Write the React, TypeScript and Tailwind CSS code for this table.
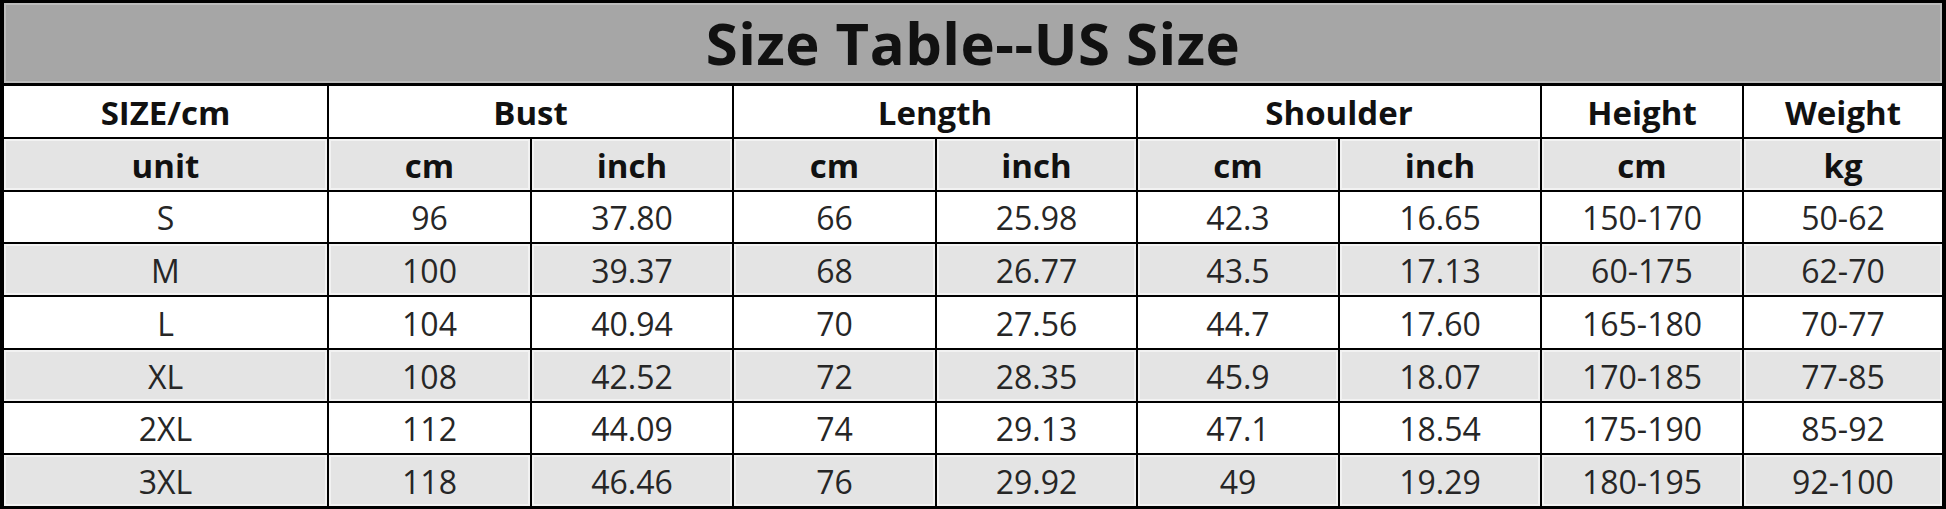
import React from "react";

const rows: string[][] = [
  ["S", "96", "37.80", "66", "25.98", "42.3", "16.65", "150-170", "50-62"],
  ["M", "100", "39.37", "68", "26.77", "43.5", "17.13", "60-175", "62-70"],
  ["L", "104", "40.94", "70", "27.56", "44.7", "17.60", "165-180", "70-77"],
  ["XL", "108", "42.52", "72", "28.35", "45.9", "18.07", "170-185", "77-85"],
  ["2XL", "112", "44.09", "74", "29.13", "47.1", "18.54", "175-190", "85-92"],
  ["3XL", "118", "46.46", "76", "29.92", "49", "19.29", "180-195", "92-100"],
];

const units = ["unit", "cm", "inch", "cm", "inch", "cm", "inch", "cm", "kg"];

function Cell({
  children,
  gray,
  bold,
  className = "",
}: {
  children: React.ReactNode;
  gray?: boolean;
  bold?: boolean;
  className?: string;
}) {
  return (
    <div
      className={`flex items-center justify-center pt-[3px] ${
        gray ? "bg-[#e4e4e4] shadow-[inset_0_0_0_2px_#f2f2f2]" : "bg-white"
      } ${
        bold
          ? "font-bold text-[#111] text-[33px]"
          : "font-normal text-[#262626] text-[32px]"
      } leading-none ${className}`}
    >
      {children}
    </div>
  );
}

export default function App() {
  return (
    <div className="w-[1946px] h-[509px] bg-black pt-[3px] pb-[3px] px-[4px] font-['Open_Sans','Noto_Sans',sans-serif]">
      <div className="grid h-full gap-[2px] grid-cols-[323px_201px_200px_201px_199px_200px_200px_200px_198px] grid-rows-[81px_repeat(8,1fr)]">
        <div className="col-span-9 flex items-center justify-center bg-[#a6a6a6] shadow-[inset_0_0_0_2px_#bcbcbc] mb-[1px]">
          <span className="text-[58px] font-bold text-[#111] leading-none tracking-[0.5px]">
            Size Table--US Size
          </span>
        </div>

        <Cell bold>SIZE/cm</Cell>
        <Cell bold className="col-span-2">Bust</Cell>
        <Cell bold className="col-span-2">Length</Cell>
        <Cell bold className="col-span-2">Shoulder</Cell>
        <Cell bold>Height</Cell>
        <Cell bold>Weight</Cell>

        {units.map((u, i) => (
          <Cell key={`u${i}`} bold gray>
            {u}
          </Cell>
        ))}

        {rows.map((r, ri) =>
          r.map((v, ci) => (
            <Cell key={`${ri}-${ci}`} gray={ri % 2 === 1}>
              {v}
            </Cell>
          ))
        )}
      </div>
    </div>
  );
}
